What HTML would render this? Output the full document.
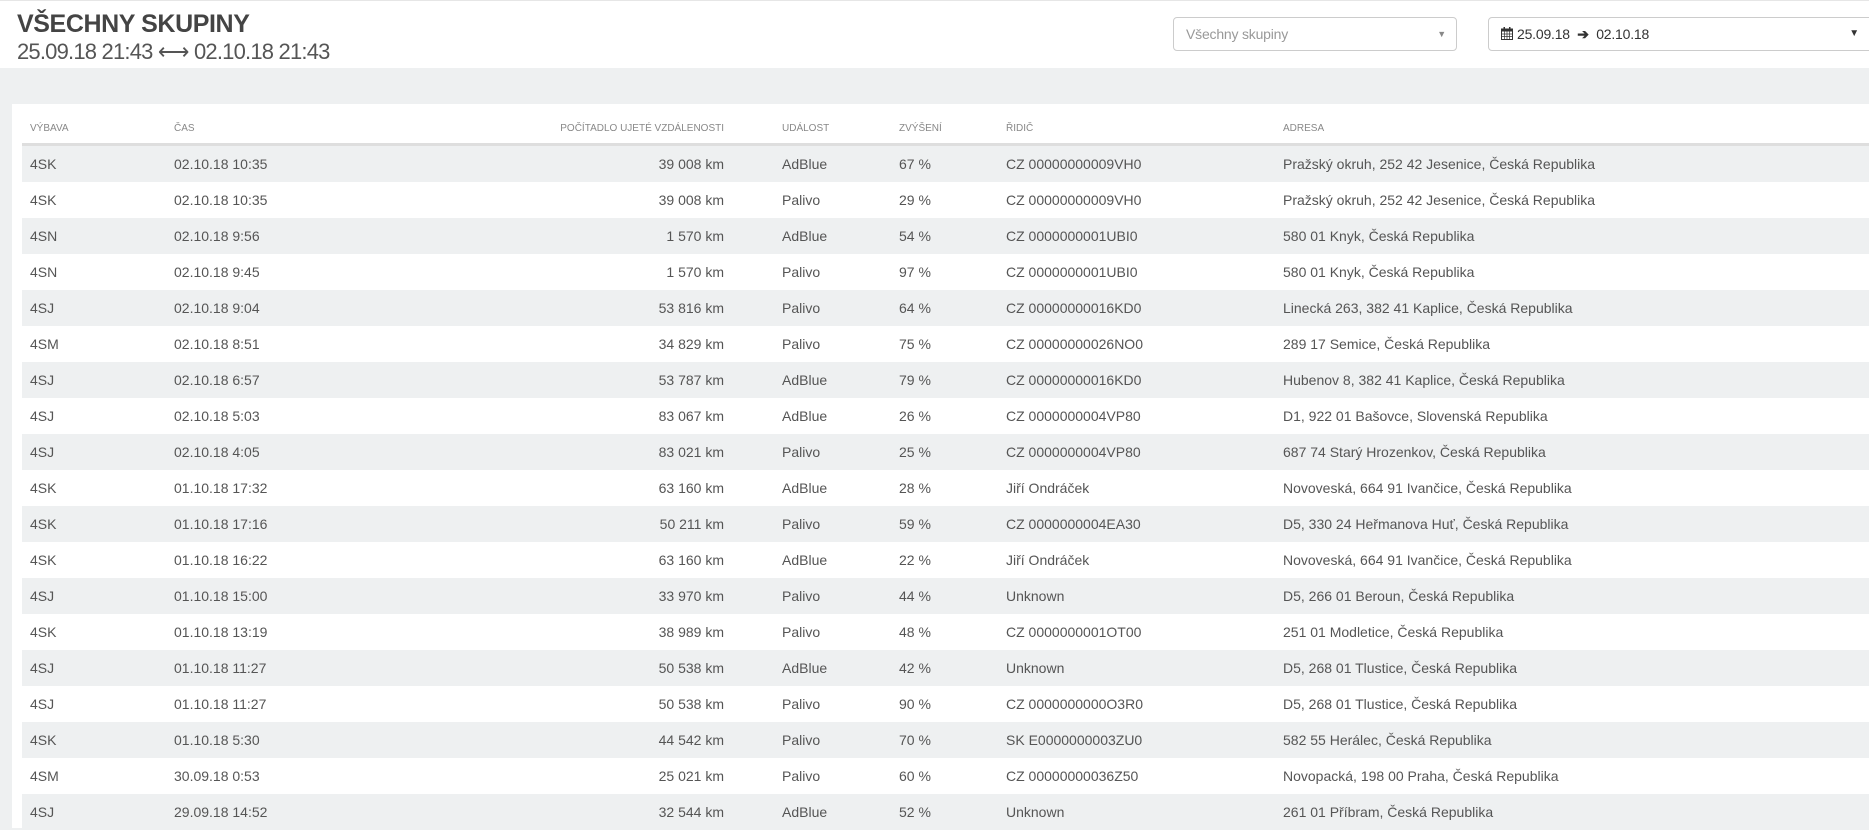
<!DOCTYPE html>
<html><head><meta charset="utf-8"><style>
*{margin:0;padding:0;box-sizing:border-box}
body{width:1869px;height:828px;overflow:hidden;background:#eef0f1;font-family:"Liberation Sans",sans-serif;color:#555;position:relative}
.top{position:absolute;left:0;top:0;width:1869px;height:68px;background:#fff;border-top:1px solid #e6e6e6}
.t1{position:absolute;left:17px;top:9px;font-size:25px;font-weight:bold;color:#444;letter-spacing:-0.4px}
.t2{position:absolute;left:17px;top:38px;font-size:22px;color:#555;letter-spacing:-0.8px}
.sel{position:absolute;top:16px;height:34px;border:1px solid #ccc;border-radius:4px;background:#fff;font-size:14px;line-height:32px;letter-spacing:-0.2px}
.card{position:absolute;left:12px;top:104px;width:1857px;height:724px;background:#fff}
.hd{position:absolute;top:123px;font-size:10px;color:#888;text-transform:uppercase;letter-spacing:0}
.hline{position:absolute;left:22px;top:143px;width:1847px;height:3px;background:#dedede}
.row{position:absolute;left:22px;width:1847px;height:36px;font-size:14px;line-height:36px;letter-spacing:0;color:#555}
.row.g{background:#eef0f1}
.row span{position:absolute;top:0;white-space:nowrap}
.c1{left:8px}.c2{left:152px}.c3{right:1145px;text-align:right}.c4{left:760px}.c5{left:877px}.c6{left:984px}.c7{left:1261px}
</style></head><body>
<div class="top">
<div class="t1">VŠECHNY SKUPINY</div>
<div class="t2">25.09.18 21:43 ⟷ 02.10.18 21:43</div>
<div class="sel" style="left:1173px;width:284px;color:#999;padding-left:12px">Všechny skupiny<span style="position:absolute;right:10px;font-size:9px;color:#888">▼</span></div>
<div class="sel" style="left:1488px;width:390px;color:#333;padding-left:12px"><svg width="12" height="13" viewBox="0 0 12 13" style="vertical-align:-1px;margin-right:4px"><rect x="0.5" y="2" width="11" height="10.5" fill="none" stroke="#333"/><rect x="0.5" y="2" width="11" height="2.5" fill="#333"/><rect x="2.5" y="0" width="1.5" height="3" fill="#333"/><rect x="8" y="0" width="1.5" height="3" fill="#333"/><path d="M0.5 7h11M0.5 9.5h11M3.5 4.5v8M6 4.5v8M8.5 4.5v8" stroke="#333" stroke-width="0.7"/></svg>25.09.18 &nbsp;<b style="font-size:14px">➔</b>&nbsp; 02.10.18<span style="position:absolute;right:18px;font-size:10px;color:#333">▼</span></div>
</div>
<div class="card"></div>
<div class="hd" style="left:30px">Výbava</div>
<div class="hd" style="left:174px">Čas</div>
<div class="hd" style="left:500px;width:224px;text-align:right">Počítadlo ujeté vzdálenosti</div>
<div class="hd" style="left:782px">Událost</div>
<div class="hd" style="left:899px">Zvýšení</div>
<div class="hd" style="left:1006px">Řidič</div>
<div class="hd" style="left:1283px">Adresa</div>
<div class="hline"></div>

<div class="row g" style="top:146px"><span class="c1">4SK</span><span class="c2">02.10.18 10:35</span><span class="c3">39 008 km</span><span class="c4">AdBlue</span><span class="c5">67 %</span><span class="c6">CZ 00000000009VH0</span><span class="c7">Pražský okruh, 252 42 Jesenice, Česká Republika</span></div>
<div class="row" style="top:182px"><span class="c1">4SK</span><span class="c2">02.10.18 10:35</span><span class="c3">39 008 km</span><span class="c4">Palivo</span><span class="c5">29 %</span><span class="c6">CZ 00000000009VH0</span><span class="c7">Pražský okruh, 252 42 Jesenice, Česká Republika</span></div>
<div class="row g" style="top:218px"><span class="c1">4SN</span><span class="c2">02.10.18 9:56</span><span class="c3">1 570 km</span><span class="c4">AdBlue</span><span class="c5">54 %</span><span class="c6">CZ 0000000001UBI0</span><span class="c7">580 01 Knyk, Česká Republika</span></div>
<div class="row" style="top:254px"><span class="c1">4SN</span><span class="c2">02.10.18 9:45</span><span class="c3">1 570 km</span><span class="c4">Palivo</span><span class="c5">97 %</span><span class="c6">CZ 0000000001UBI0</span><span class="c7">580 01 Knyk, Česká Republika</span></div>
<div class="row g" style="top:290px"><span class="c1">4SJ</span><span class="c2">02.10.18 9:04</span><span class="c3">53 816 km</span><span class="c4">Palivo</span><span class="c5">64 %</span><span class="c6">CZ 00000000016KD0</span><span class="c7">Linecká 263, 382 41 Kaplice, Česká Republika</span></div>
<div class="row" style="top:326px"><span class="c1">4SM</span><span class="c2">02.10.18 8:51</span><span class="c3">34 829 km</span><span class="c4">Palivo</span><span class="c5">75 %</span><span class="c6">CZ 00000000026NO0</span><span class="c7">289 17 Semice, Česká Republika</span></div>
<div class="row g" style="top:362px"><span class="c1">4SJ</span><span class="c2">02.10.18 6:57</span><span class="c3">53 787 km</span><span class="c4">AdBlue</span><span class="c5">79 %</span><span class="c6">CZ 00000000016KD0</span><span class="c7">Hubenov 8, 382 41 Kaplice, Česká Republika</span></div>
<div class="row" style="top:398px"><span class="c1">4SJ</span><span class="c2">02.10.18 5:03</span><span class="c3">83 067 km</span><span class="c4">AdBlue</span><span class="c5">26 %</span><span class="c6">CZ 0000000004VP80</span><span class="c7">D1, 922 01 Bašovce, Slovenská Republika</span></div>
<div class="row g" style="top:434px"><span class="c1">4SJ</span><span class="c2">02.10.18 4:05</span><span class="c3">83 021 km</span><span class="c4">Palivo</span><span class="c5">25 %</span><span class="c6">CZ 0000000004VP80</span><span class="c7">687 74 Starý Hrozenkov, Česká Republika</span></div>
<div class="row" style="top:470px"><span class="c1">4SK</span><span class="c2">01.10.18 17:32</span><span class="c3">63 160 km</span><span class="c4">AdBlue</span><span class="c5">28 %</span><span class="c6">Jiří Ondráček</span><span class="c7">Novoveská, 664 91 Ivančice, Česká Republika</span></div>
<div class="row g" style="top:506px"><span class="c1">4SK</span><span class="c2">01.10.18 17:16</span><span class="c3">50 211 km</span><span class="c4">Palivo</span><span class="c5">59 %</span><span class="c6">CZ 0000000004EA30</span><span class="c7">D5, 330 24 Heřmanova Huť, Česká Republika</span></div>
<div class="row" style="top:542px"><span class="c1">4SK</span><span class="c2">01.10.18 16:22</span><span class="c3">63 160 km</span><span class="c4">AdBlue</span><span class="c5">22 %</span><span class="c6">Jiří Ondráček</span><span class="c7">Novoveská, 664 91 Ivančice, Česká Republika</span></div>
<div class="row g" style="top:578px"><span class="c1">4SJ</span><span class="c2">01.10.18 15:00</span><span class="c3">33 970 km</span><span class="c4">Palivo</span><span class="c5">44 %</span><span class="c6">Unknown</span><span class="c7">D5, 266 01 Beroun, Česká Republika</span></div>
<div class="row" style="top:614px"><span class="c1">4SK</span><span class="c2">01.10.18 13:19</span><span class="c3">38 989 km</span><span class="c4">Palivo</span><span class="c5">48 %</span><span class="c6">CZ 0000000001OT00</span><span class="c7">251 01 Modletice, Česká Republika</span></div>
<div class="row g" style="top:650px"><span class="c1">4SJ</span><span class="c2">01.10.18 11:27</span><span class="c3">50 538 km</span><span class="c4">AdBlue</span><span class="c5">42 %</span><span class="c6">Unknown</span><span class="c7">D5, 268 01 Tlustice, Česká Republika</span></div>
<div class="row" style="top:686px"><span class="c1">4SJ</span><span class="c2">01.10.18 11:27</span><span class="c3">50 538 km</span><span class="c4">Palivo</span><span class="c5">90 %</span><span class="c6">CZ 0000000000O3R0</span><span class="c7">D5, 268 01 Tlustice, Česká Republika</span></div>
<div class="row g" style="top:722px"><span class="c1">4SK</span><span class="c2">01.10.18 5:30</span><span class="c3">44 542 km</span><span class="c4">Palivo</span><span class="c5">70 %</span><span class="c6">SK E0000000003ZU0</span><span class="c7">582 55 Herálec, Česká Republika</span></div>
<div class="row" style="top:758px"><span class="c1">4SM</span><span class="c2">30.09.18 0:53</span><span class="c3">25 021 km</span><span class="c4">Palivo</span><span class="c5">60 %</span><span class="c6">CZ 00000000036Z50</span><span class="c7">Novopacká, 198 00 Praha, Česká Republika</span></div>
<div class="row g" style="top:794px"><span class="c1">4SJ</span><span class="c2">29.09.18 14:52</span><span class="c3">32 544 km</span><span class="c4">AdBlue</span><span class="c5">52 %</span><span class="c6">Unknown</span><span class="c7">261 01 Příbram, Česká Republika</span></div>
</body></html>
